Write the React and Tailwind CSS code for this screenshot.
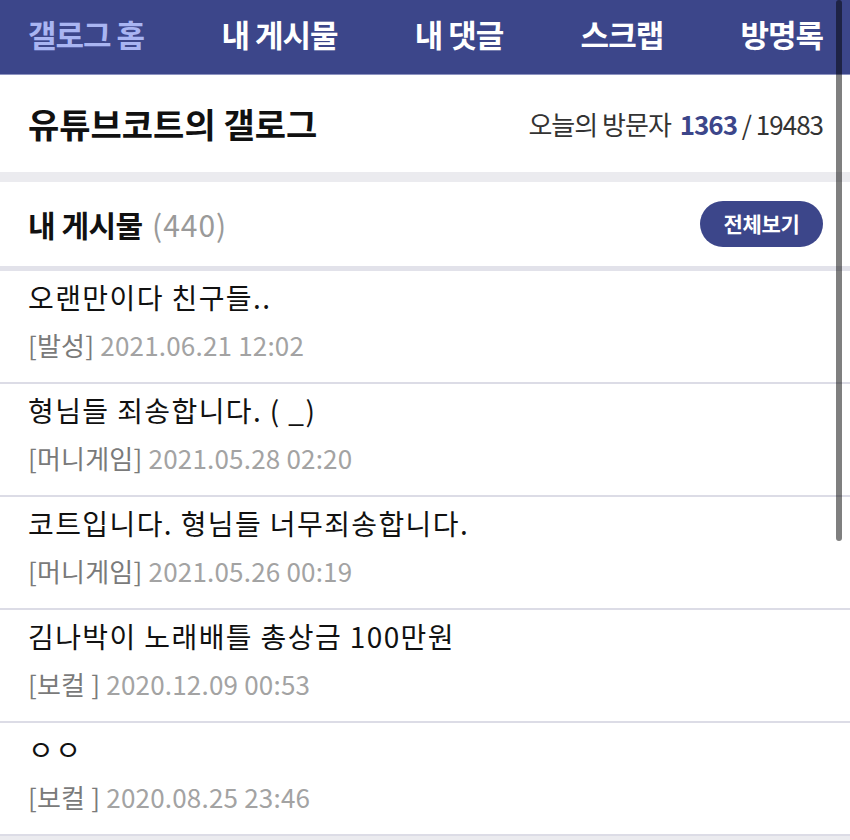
import React from 'react';

const font = { fontFamily: '"Noto Sans CJK KR", "Noto Sans", sans-serif' };

const tabs = ['갤로그 홈', '내 게시물', '내 댓글', '스크랩', '방명록'];

const posts = [
  { title: '오랜만이다 친구들..', cat: '[발성]', date: '2021.06.21 12:02' },
  { title: '형님들 죄송합니다. ( _)', cat: '[머니게임]', date: '2021.05.28 02:20' },
  { title: '코트입니다. 형님들 너무죄송합니다.', cat: '[머니게임]', date: '2021.05.26 00:19' },
  { title: '김나박이 노래배틀 총상금 100만원', cat: '[보컬 ]', date: '2020.12.09 00:53' },
  { title: 'ㅇㅇ', cat: '[보컬 ]', date: '2020.08.25 23:46' },
];

const PostItem = ({ post }) => (
  <li className="h-[113px] border-b-2 border-[#dcdce6] px-[28px] pt-[7px]">
    <p className="text-[28px] leading-[38px] text-[#111] tracking-[1.4px]">{post.title}</p>
    <p className="mt-[13px] text-[26px] leading-[32px] text-[#a3a3a3] tracking-[0.2px]">
      <span className="text-[#7a7a7a]">{post.cat}</span> {post.date}
    </p>
  </li>
);

export default function App() {
  return (
    <div className="relative w-[850px] h-[840px] overflow-hidden bg-white" style={font}>
      {/* top tabs */}
      <nav className="h-[75px] bg-[#3c468a] border-b border-[#8d93c0] flex items-center justify-between pl-[28px] pr-[27px] pb-[5px]">
        {tabs.map((t, i) => (
          <span
            key={t}
            className={`text-[31px] font-bold tracking-[-1px] ${i === 0 ? 'text-[#a9b5f2]' : 'text-white'}`}
          >
            {t}
          </span>
        ))}
      </nav>

      {/* gallog title */}
      <header className="h-[97px] flex items-center justify-between pl-[28px] pr-[27px]">
        <h1 className="text-[34px] font-bold tracking-[0px] text-[#111]">유튜브코트의 갤로그</h1>
        <div className="text-[26px] tracking-[-1px] text-[#333]">
          오늘의 방문자 <span className="ml-1 font-bold text-[#3c468a]">1363</span> / 19483
        </div>
      </header>

      <div className="h-[10px] bg-[#ebebef]" />

      {/* section head */}
      <div className="h-[84px] flex items-center justify-between pl-[28px] pr-[27px]">
        <h2 className="text-[30px] font-bold tracking-[-0.5px] text-[#111]">
          내 게시물 <span className="ml-[3px] font-normal text-[#9a9a9a] tracking-[1px]">(440)</span>
        </h2>
        <button className="w-[123px] h-[46px] rounded-full bg-[#3c468a] text-white text-[21px] font-bold tracking-[-0.3px]">
          전체보기
        </button>
      </div>

      <div className="h-[5px] bg-[#e2e2ea]" />

      <ul>
        {posts.map((p) => (
          <PostItem key={p.date} post={p} />
        ))}
      </ul>
      <div className="h-[6px] bg-[#ebebef]" />

      {/* overlay scrollbar */}
      <div className="absolute right-[8px] top-0 w-[6px] h-[541px] rounded-full bg-black/50" />
    </div>
  );
}
